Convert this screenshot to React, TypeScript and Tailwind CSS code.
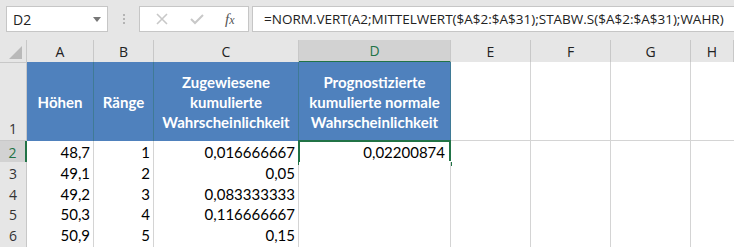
import type { ReactNode } from "react";

const cols = ["A", "B", "C", "D", "E", "F", "G", "H"];

const rows: [string, string, string][] = [
  ["48,7", "1", "0,016666667"],
  ["49,1", "2", "0,05"],
  ["49,2", "3", "0,083333333"],
  ["50,3", "4", "0,116666667"],
  ["50,9", "5", "0,15"],
];

const grid =
  "grid grid-cols-[27px_67px_60px_145px_152px_80px_80px_80px_1fr]";

const cellFont = { fontFamily: "Lato, 'Open Sans', sans-serif" };

function HeadCell({ children }: { children: ReactNode }) {
  return (
    <div
      className="flex items-center justify-center whitespace-nowrap border-r border-[#3f7a96] bg-[#4f81bd] text-center text-[15px] font-bold leading-[20px] text-white"
      style={cellFont}
    >
      {children}
    </div>
  );
}

function Cell({ children }: { children?: ReactNode }) {
  return (
    <div
      className="flex items-center justify-end border-b border-r border-[#d4d4d4] bg-white pr-[3px] text-[15px] text-black"
      style={cellFont}
    >
      {children}
    </div>
  );
}

export default function App() {
  return (
    <div
      className="h-[247px] w-[734px] overflow-hidden bg-[#e6e6e6] select-none"
      style={{ fontFamily: "'Open Sans', 'Noto Sans', sans-serif" }}
    >
      {/* formula bar */}
      <div className="flex h-[40px] items-start pt-[6px]">
        <div className="ml-[6px] flex h-[26px] w-[102px] items-center justify-between border border-[#c6c6c6] bg-white pl-[6px] pr-[6px] text-[14px] text-[#222]">
          <span>D2</span>
          <span className="h-0 w-0 border-x-[4px] border-t-[5px] border-x-transparent border-t-[#777]" />
        </div>
        <div className="flex h-[26px] w-[31px] flex-col items-center justify-center gap-[2px]">
          <span className="h-[2px] w-[2px] bg-[#b4b4b4]" />
          <span className="h-[2px] w-[2px] bg-[#b4b4b4]" />
          <span className="h-[2px] w-[2px] bg-[#b4b4b4]" />
        </div>
        <div className="flex h-[26px] w-[110px] items-center border border-[#c6c6c6] bg-white">
          <svg width="14" height="14" viewBox="0 0 14 14" className="ml-[15px]">
            <path d="M2 2 L12 12 M12 2 L2 12" stroke="#c8c8c8" strokeWidth="1.6" />
          </svg>
          <svg width="16" height="14" viewBox="0 0 16 14" className="ml-[20px]">
            <path d="M2 7 L6 11 L14 3" stroke="#c8c8c8" strokeWidth="2" fill="none" />
          </svg>
          <span
            className="ml-[20px] text-[15px] italic text-[#555]"
            style={{ fontFamily: "'Liberation Serif', serif" }}
          >
            f<span className="text-[12px]">x</span>
          </span>
        </div>
        <div className="ml-[3px] flex h-[26px] flex-1 items-center whitespace-nowrap border border-r-0 border-[#c6c6c6] bg-white pl-[11px] text-[13.5px] text-[#222]">
          =NORM.VERT(A2;MITTELWERT($A$2:$A$31);STABW.S($A$2:$A$31);WAHR)
        </div>
      </div>

      {/* column headers */}
      <div className={`${grid} h-[22px]`}>
        <div className="relative border-b border-r border-[#c8c8c8] bg-[#e6e6e6]">
          <span className="absolute bottom-[3px] right-[4px] h-0 w-0 border-b-[13px] border-l-[13px] border-b-[#b9b9b9] border-l-transparent" />
        </div>
        {cols.map((c) => (
          <div
            key={c}
            className={`flex items-center justify-center text-[14px] ${
              c === "D"
                ? "border-b-2 border-r border-b-[#217346] border-r-[#c8c8c8] bg-[#d2d2d2] text-[#217346]"
                : "border-b border-r border-[#c8c8c8] bg-[#e6e6e6] text-[#222]"
            }`}
          >
            {c}
          </div>
        ))}
      </div>

      {/* row 1 */}
      <div className={`${grid} h-[79px]`}>
        <div className="flex items-end justify-center border-b border-r border-[#c8c8c8] bg-[#e6e6e6] pb-[1px] text-[14px] text-[#333]">
          1
        </div>
        <HeadCell>Höhen</HeadCell>
        <HeadCell>Ränge</HeadCell>
        <HeadCell>
          Zugewiesene
          <br />
          kumulierte
          <br />
          Wahrscheinlichkeit
        </HeadCell>
        <HeadCell>
          Prognostizierte
          <br />
          kumulierte normale
          <br />
          Wahrscheinlichkeit
        </HeadCell>
        <div className="border-b border-r border-[#d4d4d4] bg-white" />
        <div className="border-b border-r border-[#d4d4d4] bg-white" />
        <div className="border-b border-r border-[#d4d4d4] bg-white" />
        <div className="border-b border-[#d4d4d4] bg-white" />
      </div>

      {/* data rows */}
      {rows.map((r, i) => {
        const sel = i === 0;
        return (
          <div key={i} className={`${grid} ${i === 2 ? "h-[20px]" : "h-[21px]"}`}>
            <div
              className={`flex items-center justify-center border-b text-[14px] ${
                sel
                  ? "border-r-2 border-b-[#c8c8c8] border-r-[#217346] bg-[#d2d2d2] text-[#217346]"
                  : "border-r border-[#c8c8c8] bg-[#e6e6e6] text-[#333]"
              }`}
            >
              {i + 2}
            </div>
            <Cell>{r[0]}</Cell>
            <Cell>{r[1]}</Cell>
            <Cell>{r[2]}</Cell>
            <div
              className="relative z-10 flex items-center justify-end border-b border-r border-[#d4d4d4] bg-white pr-[5px] text-[15px] text-black"
              style={cellFont}
            >
              {sel ? (
                <>
                  0,02200874
                  <span className="pointer-events-none absolute -left-px -top-px bottom-[-1px] right-[-1px] border-2 border-[#217346]" />
                  <span className="absolute bottom-[-3px] right-[-3px] h-[6px] w-[6px] border border-white bg-[#217346]" />
                </>
              ) : null}
            </div>
            <Cell />
            <Cell />
            <Cell />
            <div className="border-b border-[#d4d4d4] bg-white" />
          </div>
        );
      })}
    </div>
  );
}
